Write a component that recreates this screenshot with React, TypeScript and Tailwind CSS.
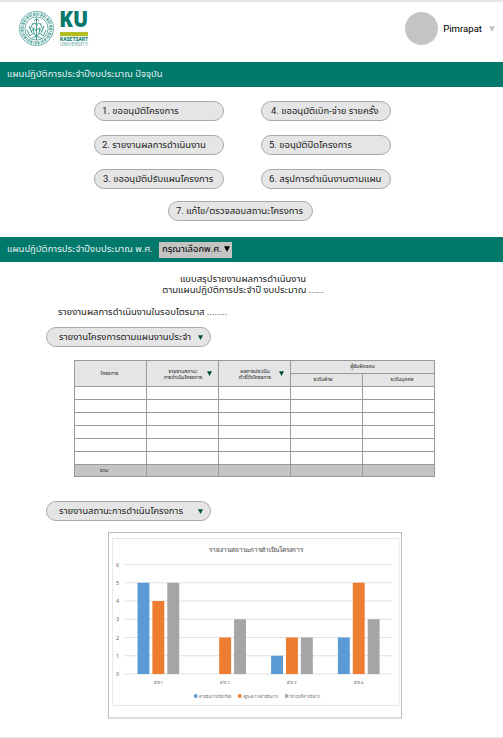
import type { ReactNode } from 'react';

const bars = [
  [5, 4, 5],
  [0, 2, 3],
  [1, 2, 2],
  [2, 5, 3],
];
const colors = ['#5b9bd5', '#ed7d31', '#a5a5a5'];
const unit = 18.25;

function Pill({ children, className = '' }: { children: ReactNode; className?: string }) {
  return (
    <div className={`flex h-5 items-center whitespace-nowrap rounded-full border border-[#aaaaaa] bg-[#e5e5e5] text-[9.530px] leading-none ${className}`}>
      {children}
    </div>
  );
}

function Caret({ className = '', size = 5 }: { className?: string; size?: number }) {
  return (
    <svg className={`shrink-0 ${className}`} width={size} height={size} viewBox="0 0 5 5">
      <path d="M0 0.3H5L2.5 5Z" fill="currentColor" />
    </svg>
  );
}

function Logo() {
  return (
    <svg width="72" height="38" viewBox="0 0 72 38" className="mt-[7px] ml-[18px] overflow-visible">
      <g fill="none" stroke="#4a9c92">
        <circle cx="18.500" cy="19.500" r="17" strokeWidth="0.8" />
        <circle cx="18.500" cy="19.500" r="14.300" strokeWidth="3.200" strokeDasharray="1.700 0.700 0.900 1.100 2.200 0.800" opacity="0.8" />
        <circle cx="18.500" cy="19.500" r="11.600" strokeWidth="0.8" />
        <path d="M18.500 8.500V31M16 12Q18.500 8 21 12M14 16Q18 12 18.500 17Q20 12 23 16M13 23Q16 17 18 22Q21 17 24 23M12 27Q16 22 18.500 28Q21 22 25 27M13 30Q18.500 25 24 30M11 17L14 24M26 17L23 24M15 14L12 20M22 14L25 20M9 21L12 27M28 21L25 27M15 18L16 25M22 18L21 25" strokeWidth="1" />
      </g>
      <text x="41.300" y="18.300" fill="#05796b" fontFamily="Open Sans, sans-serif" fontWeight="800" fontSize="23.500" textLength="29" lengthAdjust="spacingAndGlyphs">KU</text>
      <rect x="42" y="23" width="28" height="4.200" fill="#b5bd24" />
      <text x="42" y="32.300" fill="#05796b" fontFamily="Roboto, sans-serif" fontWeight="800" fontSize="5" textLength="28" lengthAdjust="spacingAndGlyphs">KASETSART</text>
      <text x="42" y="36.800" fill="#6fa9a2" fontFamily="Roboto, sans-serif" fontSize="4.600" textLength="28" lengthAdjust="spacingAndGlyphs">UNIVERSITY</text>
    </svg>
  );
}

function Chart() {
  return (
    <svg className="block" width="294" height="187" viewBox="108 532 294 187" fontFamily="Noto Sans, sans-serif" fill="#666666">
      <rect x="108.500" y="532.500" width="293" height="185.500" fill="white" stroke="#bdbdbd" />
      <rect x="112.500" y="538.500" width="286.500" height="167" fill="none" stroke="#e8e8e8" />
      <text x="255.500" y="551.500" fontSize="6.400" fontWeight="500" stroke="#666666" strokeWidth="0.150" textAnchor="middle">รายงานสถานะการดำเนินโครงการ</text>
      {[0, 1, 2, 3, 4, 5, 6].map((n) => (
        <g key={n}>
          <path d={`M125 ${674 - n * unit}H392`} stroke="#dedede" strokeWidth="0.900" />
          <text x="116" y={676 - n * unit} fontSize="5.500">{n}</text>
        </g>
      ))}
      {bars.map((g, i) => (
        <g key={i}>
          {g.map((v, j) => (
            <rect key={j} x={137.500 + i * 66.800 + j * 14.900} y={674 - v * unit} width="11.900" height={v * unit} fill={colors[j]} />
          ))}
          <text x={158.300 + i * 66.800} y="683.500" fontSize="4" textAnchor="middle">{`ฝ่าย ${i + 1}`}</text>
        </g>
      ))}
      <rect x="194" y="694.300" width="3.400" height="3.400" fill="#5b9bd5" />
      <text x="199" y="697.500" fontSize="4" textLength="32" lengthAdjust="spacingAndGlyphs">ดำเนินการเรียบร้อย</text>
      <rect x="238" y="694.300" width="3.400" height="3.400" fill="#ed7d31" />
      <text x="243" y="697.500" fontSize="4" textLength="35" lengthAdjust="spacingAndGlyphs">อยู่ระหว่างดำเนินการ</text>
      <rect x="285" y="694.300" width="3.400" height="3.400" fill="#a5a5a5" />
      <text x="290" y="697.500" fontSize="4" textLength="30" lengthAdjust="spacingAndGlyphs">ยังไม่ได้ดำเนินการ</text>
    </svg>
  );
}

const cell = 'border-r border-b border-[#9a9a9a]';

export default function App() {
  return (
    <div className="flex h-[738px] w-[503px] flex-col overflow-hidden border-t-2 border-[#e5e5e5] bg-white font-['Roboto','Noto_Sans_Thai','Noto_Sans',sans-serif] text-[9.500px] leading-none text-[#222222]">
      <header className="flex h-[60px] shrink-0 justify-between">
        <Logo />
        <div className="flex h-[53px] items-center pr-2">
          <div className="size-[33px] rounded-full bg-[#c4c4c4]" />
          <span className="ml-[5px] text-[9.600px] text-black">Pimrapat</span>
          <Caret size={6} className="ml-[7px] text-[#c4c4c4]" />
        </div>
      </header>
      <div className="flex h-[25px] shrink-0 items-center bg-[#00786a] pb-px pl-[7px] text-[#e4f1ef]">แผนปฎิบัติการประจำปีงบประมาณ ปัจจุบัน</div>
      <div className="mt-3.5 grid grid-cols-[130px_130px] justify-start gap-x-[37px] gap-y-3.5 pl-[94px]">
        <Pill className="pl-[7px]">1. ขออนุมัติโครงการ</Pill>
        <Pill className="pl-[9px]">4. ขออนุมัติเบิก-จ่าย รายครั้ง</Pill>
        <Pill className="pl-[7px]">2. รายงานผลการดำเนินงาน</Pill>
        <Pill className="pl-[7px]">5. ขอนุมัติปิดโครงการ</Pill>
        <Pill className="pl-2">3. ขออนุมัติปรับแผนโครงการ</Pill>
        <Pill className="pl-[7px]">6. สรุปการดำเนินงานตามแผน</Pill>
      </div>
      <Pill className="mt-3 ml-[168px] w-[145px] shrink-0 pl-[7px]">7. แก้ไข/ตรวจสอบสถานะโครงการ</Pill>
      <div className="mt-4 flex h-[25px] shrink-0 items-center bg-[#00786a] pl-[7px] text-[#e4f1ef]">
        <span className="w-[152px] whitespace-nowrap pb-0.5">แผนปฎิบัติการประจำปีงบประมาณ พ.ศ.</span>
        <div className="flex h-4 w-[73px] items-center whitespace-nowrap bg-[#c4c4c4] pb-0.5 pl-[3px] text-black">
          กรุณาเลือกพ.ศ.
          <Caret size={6} className="ml-0.5" />
        </div>
      </div>
      <div className="mt-[11px] text-center leading-[11px]">
        <div className="pr-[17px]">แบบสรุปรายงานผลการดำเนินงาน</div>
        <div className="pr-[17px]">ตามแผนปฎิบัติการประจำปี งบประมาณ ......</div>
      </div>
      <div className="mt-[11px] ml-[58px] h-[11px] leading-[11px]">รายงานผลการดำเนินงานในรอบไตรมาส ........</div>
      <Pill className="mt-2.5 ml-[46px] w-[165px] shrink-0 justify-between pr-[7px] pl-3">
        รายงานโครงการตามแผนงานประจำ
        <Caret className="text-[#004d40]" />
      </Pill>
      <div className="mt-[13px] ml-[74px] grid w-[361px] shrink-0 grid-cols-[72px_72px_72px_72px_72px] grid-rows-[13px_13px_13px_13px_13px_13px_13px_13px_12px] border-t border-l border-[#9a9a9a] text-[5.200px]">
        <div className={`${cell} row-span-2 flex items-center justify-center bg-[#e5e5e5] pr-0.5`}>โครงการ</div>
        <div className={`${cell} row-span-2 flex items-center bg-[#e5e5e5] pl-4 text-center leading-[6px]`}>
          <span className="flex w-10 flex-col items-center whitespace-nowrap"><span>รายงานสถานะ</span><span>การดำเนินโครงการ</span></span>
          <Caret className="ml-1 text-[#004d40]" />
        </div>
        <div className={`${cell} row-span-2 flex items-center bg-[#e5e5e5] pl-4 text-center leading-[6px]`}>
          <span className="flex w-10 flex-col items-center whitespace-nowrap"><span>ผลการประเมิน</span><span>ตัวชี้วัดโครงการ</span></span>
          <Caret className="ml-1 text-[#004d40]" />
        </div>
        <div className={`${cell} col-span-2 flex items-center justify-center bg-[#e5e5e5]`}>ผู้รับผิดชอบ</div>
        <div className={`${cell} flex items-center justify-center bg-[#e5e5e5] pr-[7px]`}>ระดับฝ่าย</div>
        <div className={`${cell} flex items-center justify-center bg-[#e5e5e5] pl-[7px]`}>ระดับบุคคล</div>
        {Array.from({ length: 30 }, (_, i) => <div key={i} className={cell} />)}
        {['รวม', '', '', '', ''].map((t, i) => (
          <div key={i} className={`${cell} flex items-center bg-[#c4c4c4] pl-[25px]`}>{t}</div>
        ))}
      </div>
      <Pill className="mt-6 ml-[46px] w-[165px] shrink-0 justify-between pr-[7px] pl-3">
        รายงานสถานะการดำเนินโครงการ
        <Caret className="text-[#004d40]" />
      </Pill>
      <div className="mt-[11px] ml-[108px] shrink-0"><Chart /></div>
      <div className="mt-[18px] h-px shrink-0 bg-[#e5e5e5]" />
    </div>
  );
}
